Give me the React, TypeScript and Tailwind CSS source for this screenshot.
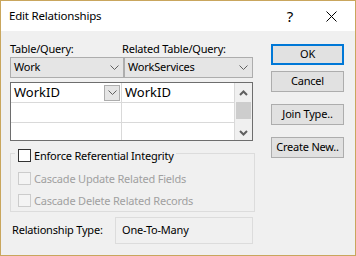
import React from "react";

function Chevron({ className = "" }: { className?: string }) {
  return (
    <svg width="9" height="5" viewBox="0 0 9 5" className={className}>
      <path d="M0.5 0.5 L4.5 4.5 L8.5 0.5" fill="none" stroke="#606060" strokeWidth="1" />
    </svg>
  );
}

function ScrollArrow({ up }: { up?: boolean }) {
  return (
    <svg width="9" height="6" viewBox="0 0 9 6">
      <path
        d={up ? "M1 5 L4.5 1.5 L8 5" : "M1 1 L4.5 4.5 L8 1"}
        fill="none"
        stroke="#606060"
        strokeWidth="2"
      />
    </svg>
  );
}

function Combo({ text, width }: { text: string; width: string }) {
  return (
    <div
      className={`${width} h-[21px] bg-[#e5e5e5] border border-[#adadad] flex items-center pl-[3px] pr-[4px]`}
    >
      <span className="flex-1">{text}</span>
      <Chevron />
    </div>
  );
}

function Btn({ label, primary, className = "" }: { label: string; primary?: boolean; className?: string }) {
  return (
    <div
      className={`w-[73px] h-[21px] bg-[#e1e1e1] flex items-center justify-center whitespace-nowrap ${
        primary ? "border-2 border-[#0078d7]" : "border border-[#adadad]"
      } ${className}`}
    >
      {label}
    </div>
  );
}

function Check({ disabled, label }: { disabled?: boolean; label: string }) {
  return (
    <div className="flex items-center h-[13px] whitespace-nowrap">
      <div
        className={`w-[13px] h-[13px] border ${
          disabled ? "border-[#cccccc] bg-[#f4f4f4]" : "border-[#333333] bg-white"
        }`}
      />
      <span className={`ml-[3px] leading-none ${disabled ? "text-[#a0a0a0]" : "text-black"}`}>{label}</span>
    </div>
  );
}

export default function App() {
  return (
    <div className="w-[356px] h-[256px] border border-[#c9a65d] flex flex-col bg-[#f0f0f0] text-[11px] tracking-[-0.2px] text-black font-['Segoe_UI','Noto_Sans',sans-serif] overflow-hidden">
      {/* title bar */}
      <div className="h-[30px] bg-white flex items-center shrink-0 pl-[8px] text-[12px]">
        <span className="text-[11.5px]">Edit Relationships</span>
        <span className="ml-auto text-[15px] mr-[33px]">?</span>
        <svg width="11" height="11" viewBox="0 0 11 11" className="mr-[18px]">
          <path d="M0.5 0.5 L10.5 10.5 M10.5 0.5 L0.5 10.5" stroke="#000" strokeWidth="1" />
        </svg>
      </div>

      <div className="flex flex-1 pl-[9px]">
        {/* left column */}
        <div className="w-[245px] flex flex-col pt-[10px]">
          <div className="flex h-[16px] items-center">
            <span className="w-[112px]">Table/Query:</span>
            <span>Related Table/Query:</span>
          </div>
          <div className="flex">
            <Combo text="Work" width="w-[114px]" />
            <Combo text="WorkServices" width="w-[129px]" />
          </div>

          {/* field grid */}
          <div className="w-[243px] h-[59px] mt-[4px] border border-[#6e6e6e] bg-white flex">
            <div className="flex-1 flex flex-col border-r border-[#d9d9d9]">
              <div className="h-[20px] flex border-b border-[#d9d9d9] text-[13px] tracking-normal">
                <div className="w-[111px] flex items-center pl-[3px] border-r border-[#d9d9d9]">
                  <span className="flex-1 leading-none">WorkID</span>
                  <div className="w-[16px] h-[16px] bg-[#e5e5e5] border border-[#adadad] flex items-center justify-center mr-[1px]">
                    <Chevron />
                  </div>
                </div>
                <div className="flex-1 flex items-center pl-[3px] leading-none">WorkID</div>
              </div>
              <div className="h-[20px] flex border-b border-[#d9d9d9]">
                <div className="w-[111px] border-r border-[#d9d9d9]" />
              </div>
              <div className="flex-1 flex">
                <div className="w-[111px] border-r border-[#d9d9d9]" />
              </div>
            </div>
            <div className="w-[17px] bg-[#f0f0f0] flex flex-col items-center">
              <div className="mt-[7px]">
                <ScrollArrow up />
              </div>
              <div className="w-[15px] h-[17px] bg-[#cdcdcd] mt-[6px]" />
              <div className="mt-[11px]">
                <ScrollArrow />
              </div>
            </div>
          </div>

          {/* referential integrity group */}
          <div className="w-[245px] h-[59px] mt-[12px] border border-[#dcdcdc] flex flex-col pl-[7px]">
            <div className="-mt-[5px] -ml-[3px] self-start bg-[#f0f0f0] pl-[3px] pr-[2px]">
              <Check label="Enforce Referential Integrity" />
            </div>
            <div className="mt-[10px]">
              <Check disabled label="Cascade Update Related Fields" />
            </div>
            <div className="mt-[9px]">
              <Check disabled label="Cascade Delete Related Records" />
            </div>
          </div>

          <div className="flex items-center mt-[5px]">
            <span className="w-[105px] pl-[2px]">Relationship Type:</span>
            <div className="w-[138px] h-[27px] border border-[#dcdcdc] flex items-center pl-[6px]">
              One-To-Many
            </div>
          </div>
        </div>

        {/* buttons */}
        <div className="ml-[16px] flex flex-col pt-[13px]">
          <Btn label="OK" primary />
          <Btn label="Cancel" className="mt-[6px]" />
          <Btn label="Join Type.." className="mt-[12px]" />
          <Btn label="Create New.." className="mt-[12px]" />
        </div>
      </div>
    </div>
  );
}
